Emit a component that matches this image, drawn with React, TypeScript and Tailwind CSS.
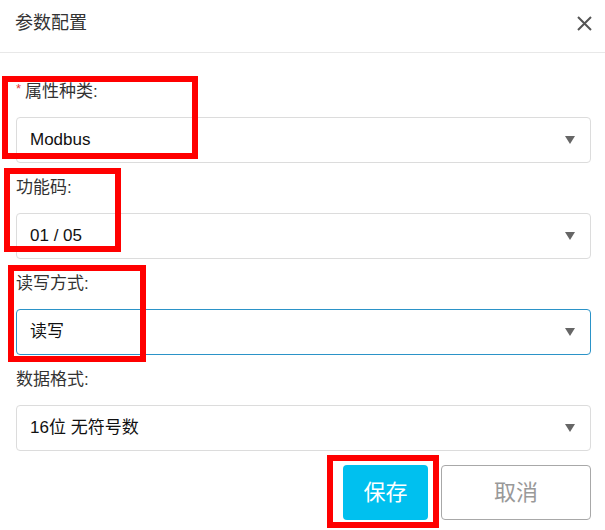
import React from "react"

const fields = [
  { label: "属性种类:", value: "Modbus", required: true, focused: false },
  { label: "功能码:", value: "01 / 05", required: false, focused: false },
  { label: "读写方式:", value: "读写", required: false, focused: true },
  { label: "数据格式:", value: "16位 无符号数", required: false, focused: false },
]

// red annotation frames drawn on top of the dialog
const marks = [
  "left-[2px] top-[76px] w-[196px] h-[83px]",
  "left-[4px] top-[168px] w-[117px] h-[84px]",
  "left-[8px] top-[265px] w-[138px] h-[97px]",
  "left-[327px] top-[455px] w-[112px] h-[73px]",
]

function Field({ label, value, required, focused }: { label: string; value: string; required: boolean; focused: boolean }) {
  return (
    <div className="flex flex-col">
      <div className="flex h-[24px] items-center text-[17px] leading-[24px] text-[#333]">
        {required && <span className="mr-[4px] self-start pt-[2px] text-[13px] leading-[13px] text-[#e53935]">*</span>}
        <span>{label}</span>
      </div>
      <div
        className={`mt-[13px] flex h-[46px] items-center justify-between rounded-[4px] border bg-white pl-[13px] pr-[15px] ${
          focused ? "border-[#2b93c8]" : "border-[#dcdcdc]"
        }`}
      >
        <span className="text-[17px] text-[#111]">{value}</span>
        <svg width="10" height="8" viewBox="0 0 10 8">
          <path d="M0 0 L10 0 L5 8 Z" fill="#666" />
        </svg>
      </div>
    </div>
  )
}

export default function App() {
  return (
    <div
      className="relative h-[530px] w-[605px] overflow-hidden bg-white"
      style={{ fontFamily: '"Liberation Sans", "Noto Sans CJK SC", sans-serif' }}
    >
      <div className="flex h-[53px] items-start justify-between border-b border-[#e8e8e8] pl-[15px] pr-[13px] pt-[9px]">
        <span className="text-[18px] leading-[28px] text-[#333]">参数配置</span>
        <svg width="15" height="15" viewBox="0 0 15 15" className="mt-[7px]">
          <path d="M1 1 L14 14 M14 1 L1 14" stroke="#555" strokeWidth="2" />
        </svg>
      </div>

      <div className="flex flex-col gap-[13px] pl-4 pr-[14px] pt-[27px]">
        {fields.map((f) => (
          <Field key={f.label} {...f} />
        ))}
      </div>

      <div className="mt-[14px] flex justify-end gap-[13px] pr-[14px]">
        <button className="h-[55px] w-[85px] rounded-[4px] bg-[#00c0ef] text-[22px] text-white">保存</button>
        <button className="h-[55px] w-[150px] rounded-[4px] border border-[#a8a8a8] bg-white text-[22px] text-[#999]">取消</button>
      </div>

      {marks.map((m) => (
        <div key={m} className={`pointer-events-none absolute border-[6px] border-[#ff0000] ${m}`} />
      ))}
    </div>
  )
}
